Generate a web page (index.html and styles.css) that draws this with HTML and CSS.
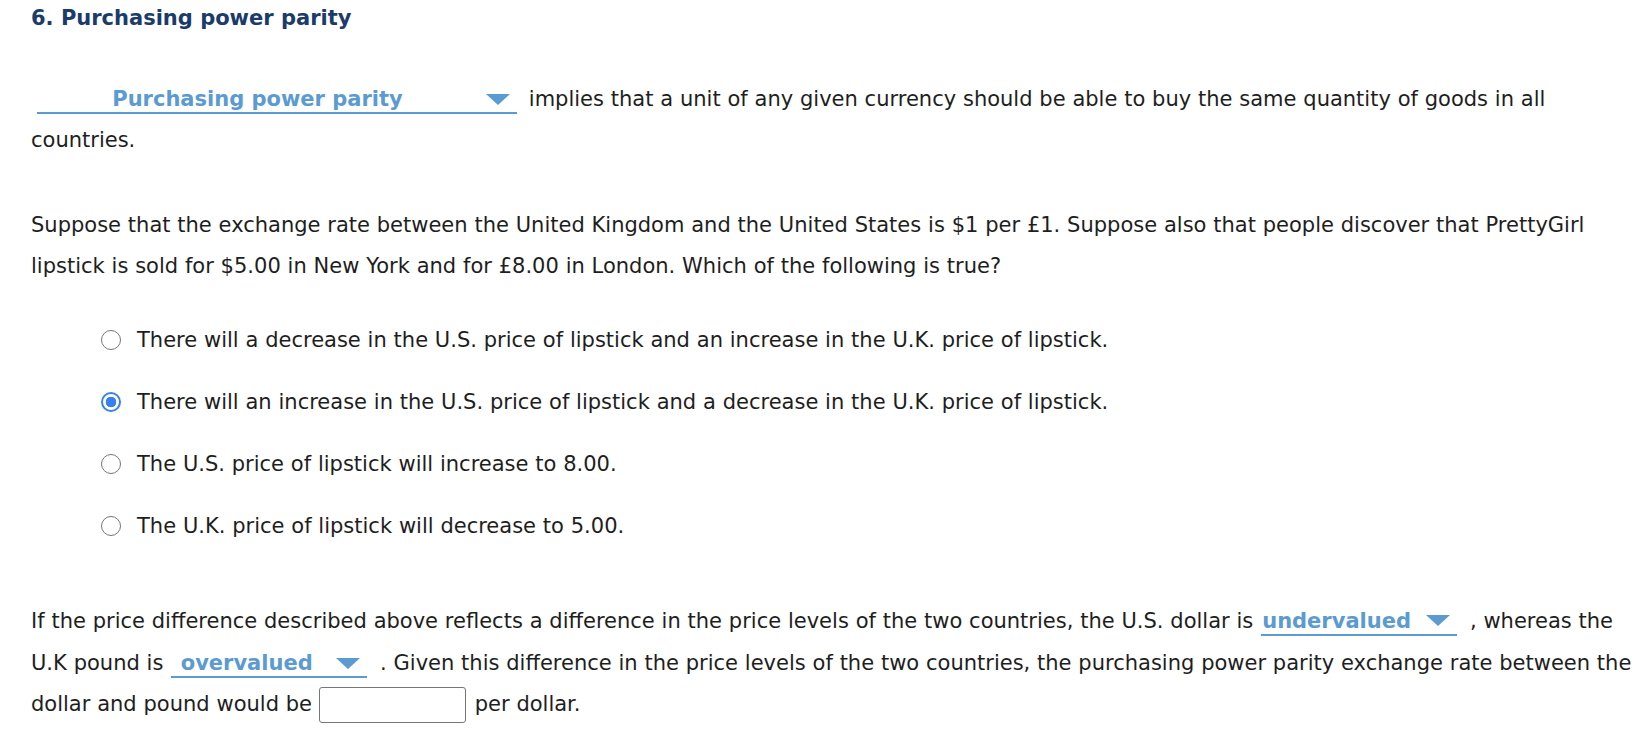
FILE: index.html
```html
<!DOCTYPE html>
<html lang="en">
<head>
<meta charset="utf-8">
<title>Purchasing power parity</title>
<link rel="stylesheet" href="styles.css">
</head>
<body>
<div class="question">
  <h2 class="title">6. Purchasing power parity</h2>

  <p class="para first">
    <span class="dropdown dd-ppp"><span class="dd-text">Purchasing power parity</span><span class="dd-arrow"></span></span> implies that a unit of any given currency should be able to buy the same quantity of goods in all countries.
  </p>

  <p class="para second">
    Suppose that the exchange rate between the United Kingdom and the United States is $1 per £1. Suppose also that people discover that PrettyGirl lipstick is sold for $5.00 in New York and for £8.00 in London. Which of the following is true?
  </p>

  <ul class="options">
    <li class="option"><input class="radio" type="radio" name="q6"><span>There will a decrease in the U.S. price of lipstick and an increase in the U.K. price of lipstick.</span></li>
    <li class="option"><input class="radio" type="radio" name="q6" checked><span>There will an increase in the U.S. price of lipstick and a decrease in the U.K. price of lipstick.</span></li>
    <li class="option"><input class="radio" type="radio" name="q6"><span>The U.S. price of lipstick will increase to 8.00.</span></li>
    <li class="option"><input class="radio" type="radio" name="q6"><span>The U.K. price of lipstick will decrease to 5.00.</span></li>
  </ul>

  <p class="para third">
    If the price difference described above reflects a difference in the price levels of the two countries, the U.S. dollar is <span class="dropdown dd-small dd-under"><span class="dd-text">undervalued</span><span class="dd-arrow"></span></span> , whereas the U.K pound is <span class="dropdown dd-small dd-over"><span class="dd-text">overvalued</span><span class="dd-arrow"></span></span> . Given this difference in the price levels of the two countries, the purchasing power parity exchange rate between the dollar and pound would be <input class="answer" type="text" aria-label="exchange rate"> per dollar.
  </p>
</div>
</body>
</html>
```

FILE: styles.css
```css
html, body {
  margin: 0;
  padding: 0;
  background: #ffffff;
}

body {
  font-family: "DejaVu Sans", Verdana, sans-serif;
  font-size: 21px;
  word-spacing: 0.15px;
  color: #1e1e1e;
}

.question {
  padding: 6px 4px 0 31px;
}

.title {
  margin: 0;
  font-size: 21px;
  line-height: 24px;
  font-weight: bold;
  word-spacing: 0;
  color: #1b3b6b;
}

.para {
  margin: 0;
  line-height: 41px;
}

.first {
  margin-top: 49px;
}

.second {
  margin-top: 44px;
}

.third {
  margin-top: 44px;
}

.dropdown {
  display: inline-flex;
  align-items: baseline;
  box-sizing: border-box;
  padding-bottom: 2px;
  line-height: 22px;
  border-bottom: 2px solid #5b9bd1;
  color: #5b9bd1;
  font-weight: bold;
  word-spacing: 0;
  vertical-align: baseline;
}

.dd-text {
  flex: 1;
  text-align: center;
  white-space: nowrap;
}

.dd-arrow {
  width: 0;
  height: 0;
  margin: 0 7px 0 8px;
  border-left: 12.5px solid transparent;
  border-right: 12.5px solid transparent;
  border-top: 11px solid #5b9bd1;
  align-self: center;
  flex: none;
}

.dd-ppp {
  width: 480px;
  margin: 0 5px 0 6px;
}

.dd-small {
  width: 196px;
  margin: 0 6px 0 1px;
}

.dd-small .dd-text {
  padding-right: 6px;
}

.dd-under {
  margin-bottom: 7.5px;
}

.options {
  list-style: none;
  margin: 22.5px 0 0 0;
  padding: 0 0 0 70px;
}

.option {
  display: flex;
  align-items: center;
  height: 61.8px;
}

.radio {
  appearance: none;
  -webkit-appearance: none;
  box-sizing: border-box;
  width: 20px;
  height: 20px;
  margin: 0 16px 0 0;
  border: 1.5px solid #767676;
  border-radius: 50%;
  background: #ffffff;
  flex: none;
}

.radio:checked {
  border: 2.5px solid #3880f0;
  background: radial-gradient(circle, #3880f0 0 5px, #ffffff 5.6px);
}

.answer {
  box-sizing: border-box;
  width: 147px;
  height: 36px;
  margin: 0 2px 0 0;
  padding: 0 6px;
  border: 1px solid #767676;
  border-radius: 3px;
  vertical-align: middle;
  font: inherit;
}
```
